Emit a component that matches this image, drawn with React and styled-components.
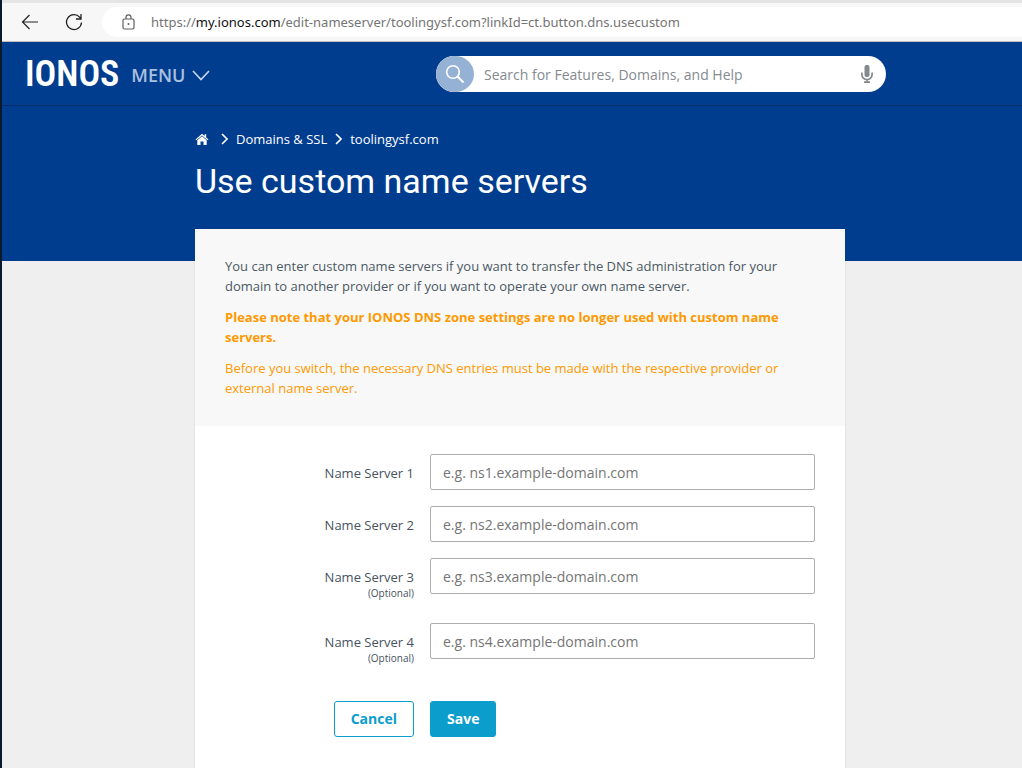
import React from 'react';
import styled, { createGlobalStyle } from 'styled-components';

const BLUE = '#003d8f';
const ACCENT = '#0b9dcc';

const GlobalStyle = createGlobalStyle`
  *, *::before, *::after { box-sizing: border-box; }
  body {
    margin: 0;
    background: #efefef;
    font-family: "Open Sans", "Noto Sans", sans-serif;
    font-size: 13px;
    line-height: 20px;
    color: #465a75;
  }
  input, button { font-family: inherit; }
`;

const Window = styled.div`
  display: flex;
  flex-direction: column;
  min-height: 100vh;
  border-left: 2px solid #0a1a2c;
`;

const BrowserBar = styled.div`
  display: flex;
  align-items: center;
  height: 42px;
  padding: 0 0 0 18px;
  background: #f7f7f7;
  border-top: 3px solid #e5e5e5;
  border-bottom: 1px solid #c0c0c0;
`;

const IconButton = styled.button`
  display: flex;
  align-items: center;
  justify-content: center;
  width: ${(p) => p.$width || 20}px;
  height: 20px;
  margin-right: ${(p) => p.$gap || 0}px;
  padding: 0;
  border: 0;
  background: none;
  color: ${(p) => p.$color || '#222'};
`;

const AddressBar = styled.div`
  display: flex;
  flex: 1;
  align-items: center;
  gap: 14px;
  height: 30px;
  padding-left: 18px;
  border-radius: 15px 0 0 15px;
  background: #fff;
`;

const Url = styled.a`
  color: #747474;
  font-family: "Noto Sans", "Open Sans", sans-serif;
  font-size: 13px;
  text-decoration: none;
  white-space: nowrap;
`;

const Host = styled.span`
  color: #111;
`;

const Header = styled.header`
  display: flex;
  align-items: center;
  justify-content: space-between;
  height: 64px;
  padding: 0 136px 0 23px;
  background: ${BLUE};
  border-bottom: 1px solid #002a68;
`;

const Brand = styled.div`
  display: flex;
  align-items: center;
  gap: 12px;
`;

const Logo = styled.a`
  min-width: 94px;
  color: #fff;
  font-family: "Roboto Condensed", "Liberation Sans", sans-serif;
  font-size: 36px;
  font-weight: 600;
  line-height: 40px;
  text-decoration: none;
`;

const MenuButton = styled.button`
  display: flex;
  align-items: center;
  gap: 7px;
  padding: 3px 0 0;
  border: 0;
  background: none;
  color: #abc0df;
  font-size: 18px;
  font-weight: 600;
  line-height: 24px;
`;

const Search = styled.form`
  display: flex;
  align-items: center;
  width: 450px;
  height: 36px;
  padding-right: 9px;
  border-radius: 18px;
  background: #fff;
`;

const SearchButton = styled.button`
  display: flex;
  align-items: center;
  justify-content: center;
  width: 38px;
  height: 36px;
  padding: 0;
  border: 0;
  border-radius: 50%;
  background: #95b1d3;
`;

const SearchInput = styled.input`
  flex: 1;
  min-width: 0;
  padding: 2px 10px 0;
  border: 0;
  outline: 0;
  background: none;
  font-size: 14px;
  &::placeholder { color: #858a90; opacity: 1; }
`;

const Hero = styled.section`
  height: 155px;
  padding: 23px 0 0 16px;
  background: ${BLUE};
  color: #fff;
`;

const Column = styled.div`
  width: 100%;
  max-width: 650px;
  margin: 0 auto;
`;

const Breadcrumbs = styled.nav`
  display: flex;
  align-items: center;
  gap: 8px;
`;

const Crumb = styled.a`
  display: flex;
  color: #fff;
  text-decoration: none;
`;

const HomeCrumb = styled(Crumb)`
  margin-right: 4px;
`;

const Title = styled.h1`
  margin: 10px 0 0;
  font-family: Roboto, "Open Sans", sans-serif;
  font-size: 34px;
  font-weight: 400;
  line-height: 44px;
`;

const Main = styled.main`
  display: flex;
  flex: 1;
  margin-top: -32px;
  padding-left: 16px;
`;

const Card = styled(Column)`
  background: #fff;
  box-shadow: 0 0 2px rgba(0, 0, 0, 0.12);
`;

const Notice = styled.section`
  padding: 27px 30px 28px;
  background: #f8f8f8;
`;

const Text = styled.p`
  margin: 0;
  color: ${(p) => (p.$warning ? '#ff9900' : '#4b5864')};
  font-weight: ${(p) => (p.$strong ? 700 : 400)};
  & + & { margin-top: 11px; }
`;

const Form = styled.form`
  display: flex;
  flex-direction: column;
  gap: 16px;
  padding: 28px 30px 31px;
`;

const Row = styled.div`
  display: grid;
  grid-template-columns: 189fr 385fr;
  column-gap: 16px;
  align-items: start;
`;

const Label = styled.label`
  display: flex;
  flex-direction: column;
  padding-top: 9px;
  color: #465260;
  text-align: right;
`;

const Optional = styled.small`
  padding-bottom: 7px;
  font-size: 10px;
  line-height: 13px;
`;

const Input = styled.input`
  width: 100%;
  height: 36px;
  padding: 0 12px;
  border: 1px solid #adadad;
  border-radius: 2px;
  background: #fff;
  color: #465260;
  font-size: 14px;
  &::placeholder { color: #757575; opacity: 1; }
`;

const Actions = styled(Row)`
  margin-top: 13px;
  justify-items: start;
`;

const Button = styled.button`
  justify-self: ${(p) => (p.$primary ? 'start' : 'end')};
  height: 36px;
  padding: 0 16px 2px;
  border: 1px solid ${ACCENT};
  border-radius: 3px;
  background: ${(p) => (p.$primary ? ACCENT : '#fff')};
  color: ${(p) => (p.$primary ? '#fff' : ACCENT)};
  font-size: 14px;
  font-weight: 700;
`;

const Chevron = () => (
  <svg width="7" height="12" viewBox="0 0 7 12" fill="none" stroke="currentColor" strokeWidth="1.6" aria-hidden="true">
    <path d="M1 1l5 5-5 5" />
  </svg>
);

const servers = [
  { n: 1 },
  { n: 2 },
  { n: 3, optional: true },
  { n: 4, optional: true },
];

export default function App() {
  return (
    <Window>
      <GlobalStyle />
      <BrowserBar>
        <IconButton $gap={24} type="button" aria-label="Back">
          <svg width="18" height="16" viewBox="0 0 18 16" fill="none" stroke="currentColor" strokeWidth="1.2">
            <path d="M17 8H1.5M8.5 1L1.5 8l7 7" />
          </svg>
        </IconButton>
        <IconButton $gap={18} type="button" aria-label="Refresh">
          <svg width="18" height="18" viewBox="0 0 18 18" fill="none" stroke="currentColor" strokeWidth="1.3">
            <path d="M16.5 9.5A7.5 7.5 0 1 1 14.8 4.3L15.8 5.5M16 1v5h-5" />
          </svg>
        </IconButton>
        <AddressBar>
          <IconButton $width={17} $color="#5f5f5f" type="button" aria-label="Site information">
            <svg width="13" height="16" viewBox="0 0 13 16" fill="none" stroke="currentColor" strokeWidth="1.2">
              <rect x="1" y="5" width="11" height="10" rx="1.5" />
              <path d="M4 5V3.3a2.5 2.5 0 0 1 5 0V5" />
              <circle cx="6.5" cy="10" r="1" fill="currentColor" stroke="none" />
            </svg>
          </IconButton>
          <Url href="#address">
            https://<Host>my.ionos.com</Host>/edit-nameserver/toolingysf.com?linkId=ct.button.dns.usecustom
          </Url>
        </AddressBar>
      </BrowserBar>

      <Header>
        <Brand>
          <Logo href="#home">IONOS</Logo>
          <MenuButton type="button">
            MENU
            <svg width="18" height="11" viewBox="0 0 18 11" fill="none" stroke="#c9d7ea" strokeWidth="1.6" aria-hidden="true">
              <path d="M1 1l8 8.5L17 1" />
            </svg>
          </MenuButton>
        </Brand>
        <Search role="search">
          <SearchButton type="button" aria-label="Search">
            <svg width="20" height="20" viewBox="0 0 20 20" fill="none" stroke="#fff" strokeWidth="1.6">
              <circle cx="8" cy="8" r="6.3" />
              <path d="M12.5 12.5l6 6" strokeWidth="2" />
            </svg>
          </SearchButton>
          <SearchInput type="search" aria-label="Search" placeholder="Search for Features, Domains, and Help" />
          <IconButton type="button" aria-label="Voice search" $color="#85898c">
            <svg width="12" height="18" viewBox="0 0 12 18" fill="none" stroke="currentColor" strokeWidth="1.7">
              <rect x="3.5" y="0" width="5" height="12" rx="2" fill="currentColor" stroke="none" />
              <path d="M.9 7.5v2a5.1 5.1 0 0 0 10.2 0v-2M6 14.5v2.5M3 17.2h6" />
            </svg>
          </IconButton>
        </Search>
      </Header>

      <Hero>
        <Column>
          <Breadcrumbs aria-label="Breadcrumb">
            <HomeCrumb href="#home" aria-label="Home">
              <svg width="14" height="12" viewBox="0 0 14 12" fill="currentColor">
                <path d="M7 .8L.5 6.4l.8.9L7 2.4l5.7 4.9.8-.9-2.3-2V1.2H9.6v1.7z" />
                <path d="M7 3.2L2.3 7.2V12h3.2V8.6h3V12h3.2V7.2z" />
              </svg>
            </HomeCrumb>
            <Chevron />
            <Crumb href="#domains">Domains &amp; SSL</Crumb>
            <Chevron />
            <Crumb href="#domain">toolingysf.com</Crumb>
          </Breadcrumbs>
          <Title>Use custom name servers</Title>
        </Column>
      </Hero>

      <Main>
        <Card>
          <Notice>
            <Text>
              You can enter custom name servers if you want to transfer the DNS administration for your
              domain to another provider or if you want to operate your own name server.
            </Text>
            <Text $warning $strong>
              Please note that your IONOS DNS zone settings are no longer used with custom name servers.
            </Text>
            <Text $warning>
              Before you switch, the necessary DNS entries must be made with the respective provider or
              external name server.
            </Text>
          </Notice>
          <Form>
            {servers.map(({ n, optional }) => (
              <Row key={n}>
                <Label htmlFor={`ns${n}`}>
                  Name Server {n}
                  {optional && <Optional>(Optional)</Optional>}
                </Label>
                <Input id={`ns${n}`} type="text" placeholder={`e.g. ns${n}.example-domain.com`} />
              </Row>
            ))}
            <Actions>
              <Button type="button">Cancel</Button>
              <Button type="button" $primary>Save</Button>
            </Actions>
          </Form>
        </Card>
      </Main>
    </Window>
  );
}
